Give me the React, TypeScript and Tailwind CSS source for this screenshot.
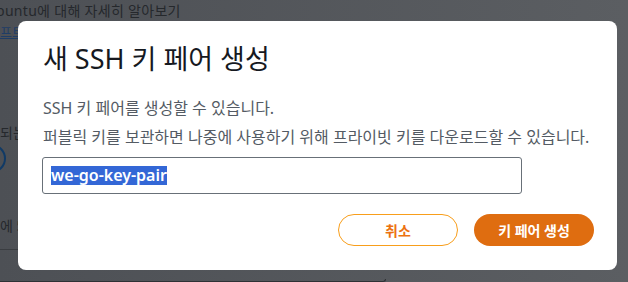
const font = { fontFamily: '"Noto Sans", "Noto Sans CJK KR", sans-serif' }

function Backdrop() {
  return (
    <div className="flex flex-col h-full text-[14px] text-[#25282c]">
      <div className="-ml-[4px] mt-[1px] leading-[20px] tracking-[0.3px]">buntu에 대해 자세히 알아보기</div>
      <div className="mt-[3px] leading-[16px] text-[13px] text-[#1f3d66] underline">프트</div>
      <div className="mt-[84px] leading-[18px]">되는</div>
      <div className="-ml-[26px] mt-[2px] w-[32px] h-[34px] rounded-full border-2 border-[#103a66]" />
      <div className="mt-[44px] leading-[18px]">에 5</div>
      <div className="mt-[14px] w-[20px] border-t border-[#3a3d41]" />
      <div className="mt-[29px] w-[386px] h-[4px] border-b border-r rounded-br-[6px] border-[#2e3135]" />
    </div>
  )
}

export default function App() {
  return (
    <div
      className="relative w-[628px] h-[282px] overflow-hidden bg-gradient-to-r from-[#4d5055] to-[#5b5e62]"
      style={font}
    >
      <Backdrop />
      <div className="absolute left-[18px] top-[21px] w-[599px] h-[249px] bg-white rounded-[8px] pl-[25px] pr-[23px] pt-[18px]">
        <h2 className="text-[27px] leading-[40px] font-normal text-[#16191f]">새 SSH 키 페어 생성</h2>
        <p className="mt-[19px] text-[16px] leading-[20px] text-[#545b64]">SSH 키 페어를 생성할 수 있습니다.</p>
        <p className="mt-[9px] text-[16px] leading-[20px] text-[#545b64]">
          퍼블릭 키를 보관하면 나중에 사용하기 위해 프라이빗 키를 다운로드할 수 있습니다.
        </p>
        <div className="mt-[10px] -ml-[1px] w-[480px] h-[37px] border border-[#687078] rounded-[3px] flex items-center pl-[8px]">
          <span className="bg-[#3367d6] text-white text-[16px] font-semibold leading-[19px]">we-go-key-pair</span>
        </div>
        <div className="mt-[20px] flex justify-end gap-[16px]">
          <button className="w-[120px] h-[32px] rounded-full border border-[#f89e1b] text-[#ec7211] text-[14px] font-bold">
            취소
          </button>
          <button className="w-[120px] h-[32px] rounded-full bg-[#df6d10] text-white text-[14px] font-bold">
            키 페어 생성
          </button>
        </div>
      </div>
    </div>
  )
}
